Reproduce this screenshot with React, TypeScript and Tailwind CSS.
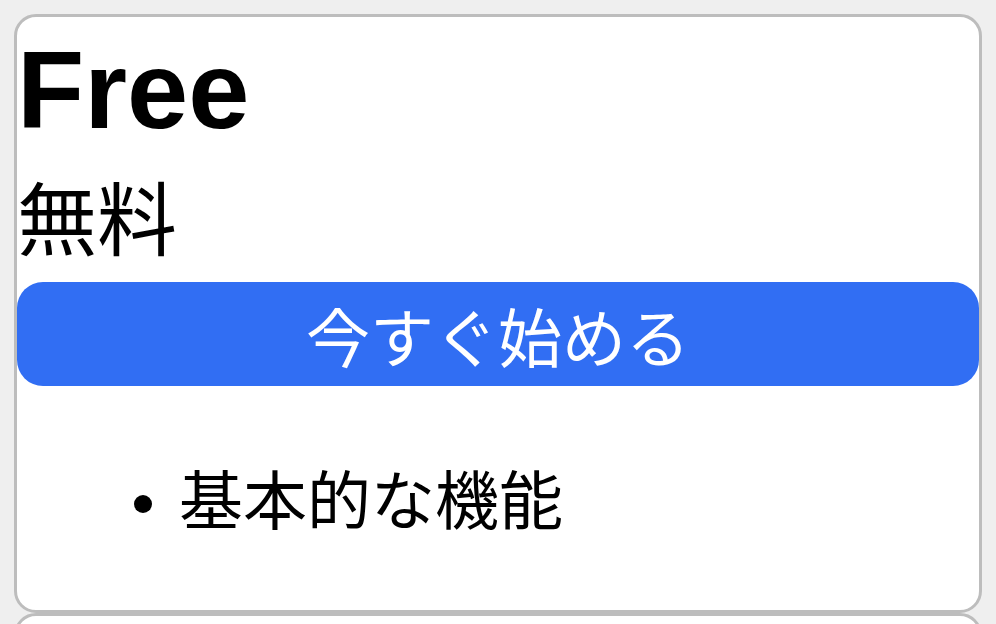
import React from 'react';

interface Plan {
  name: string;
  price: string;
  cta: string;
  features: string[];
}

const PLANS: Plan[] = [
  { name: 'Free', price: '無料', cta: '今すぐ始める', features: ['基本的な機能'] },
  { name: 'Pro', price: '¥980 / 月', cta: '今すぐ始める', features: ['すべての機能', '優先サポート'] },
];

const PlanCard: React.FC<{ plan: Plan }> = ({ plan }) => (
  <div className="bg-white border-[3px] border-[#bdbdbd] rounded-[22px] overflow-hidden font-['Noto_Sans_CJK_JP','Liberation_Sans',sans-serif] text-black">
    <h2 className="mt-[18px] text-[110px] leading-none font-bold font-['Liberation_Sans',Arial,sans-serif]">
      {plan.name}
    </h2>
    <p className="mt-[29px] text-[80px] leading-none">{plan.price}</p>
    <button className="mt-[28px] w-full h-[104px] flex items-center justify-center rounded-[26px] bg-[#316ef3] text-white text-[64px] leading-none">
      {plan.cta}
    </button>
    <ul className="mt-[78px] mb-[82px] flex flex-col text-[64px] leading-none">
      {plan.features.map(f => (
        <li key={f} className="flex items-start">
          <span className="ml-[117px] mt-[31px] w-[18px] h-[18px] rounded-full bg-black shrink-0" />
          <span className="ml-[27px]">{f}</span>
        </li>
      ))}
    </ul>
  </div>
);

export default function App() {
  return (
    <div className="min-h-screen bg-[#efefef] px-[14px] pt-[14px] pb-[14px]">
      {PLANS.map(p => (
        <PlanCard key={p.name} plan={p} />
      ))}
    </div>
  );
}
